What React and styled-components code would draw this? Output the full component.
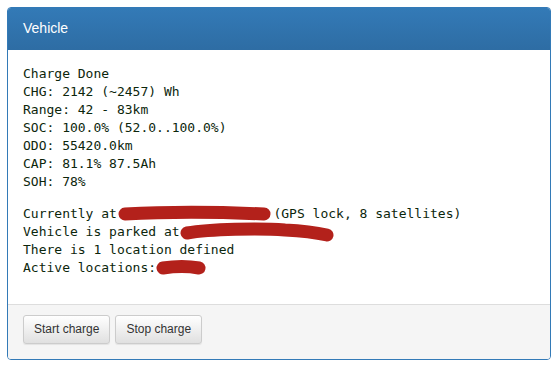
import React from "react";
import styled, { createGlobalStyle } from "styled-components";

const GlobalStyle = createGlobalStyle`
  body {
    margin: 0;
    background: #fff;
    font-family: "Liberation Sans", Arial, sans-serif;
  }
`;

const Page = styled.div`
  padding: 7px 8px 8px 7px;
`;

const Panel = styled.div`
  border: 1px solid #337ab7;
  border-radius: 4px;
  overflow: hidden;
  background: #fff;
`;

const Heading = styled.div`
  padding: 10px 15px;
  color: #fff;
  font-size: 14px;
  line-height: 21px;
  background: linear-gradient(to bottom, #337ab7 0%, #2e6da4 100%);
  border-bottom: 1px solid #2e6da4;
`;

const Body = styled.div`
  padding: 15px 15px 27px;
`;

const Output = styled.div`
  font-family: "DejaVu Sans Mono", "Liberation Mono", monospace;
  font-size: 13px;
  line-height: 18px;
  color: #0c260c;
  white-space: pre;
  margin-bottom: ${(p) => p.$gap || 0}px;
`;

const Hidden = styled.span`
  position: relative;
  display: inline-block;
  vertical-align: top;
  height: 18px;
  width: ${(p) => p.$chars}ch;
`;

const Scribble = styled.svg`
  position: absolute;
  left: ${(p) => p.$left}px;
  top: ${(p) => p.$top}px;
  overflow: visible;
`;

const Footer = styled.div`
  display: flex;
  gap: 5px;
  padding: 10px 15px 15px;
  background: #f5f5f5;
  border-top: 1px solid #ddd;
`;

const Button = styled.button`
  font-family: "Liberation Sans", Arial, sans-serif;
  font-size: 12px;
  line-height: 17px;
  padding: 5px 10px;
  color: #333;
  background: linear-gradient(to bottom, #fff 0%, #e0e0e0 100%);
  border: 1px solid #ccc;
  border-radius: 3px;
  box-shadow: inset 0 1px 0 rgba(255, 255, 255, 0.15), 0 1px 1px rgba(0, 0, 0, 0.075);
  cursor: pointer;
`;

function Redacted({ chars, width, d, left, top, height }) {
  return (
    <Hidden $chars={chars}>
      <Scribble $left={left} $top={top} width={width} height={height}>
        <path d={d} stroke="#b3211b" strokeWidth="13" strokeLinecap="round" fill="none" />
      </Scribble>
    </Hidden>
  );
}

export default function App() {
  return (
    <Page>
      <GlobalStyle />
      <Panel>
        <Heading>Vehicle</Heading>
        <Body>
          <Output $gap={14}>
            {`Charge Done
CHG: 2142 (~2457) Wh
Range: 42 - 83km
SOC: 100.0% (52.0..100.0%)
ODO: 55420.0km
CAP: 81.1% 87.5Ah
SOH: 78%`}
          </Output>
          <Output>
            {"Currently at"}
            <Redacted chars={20} left={1} top={0} width={153} height={18}
              d="M7 9 C45 7, 100 7, 146 9" />
            {"(GPS lock, 8 satellites)\nVehicle is parked at"}
            <Redacted chars={19} left={0} top={0} width={153} height={18}
              d="M7 10 C30 6, 80 5, 105 7 C125 8, 138 10, 147 12" />
            {"\nThere is 1 location defined\nActive locations:"}
            <Redacted chars={6} left={0} top={0} width={50} height={18}
              d="M7 9 C20 7, 32 7, 43 9" />
          </Output>
        </Body>
        <Footer>
          <Button>Start charge</Button>
          <Button>Stop charge</Button>
        </Footer>
      </Panel>
    </Page>
  );
}
